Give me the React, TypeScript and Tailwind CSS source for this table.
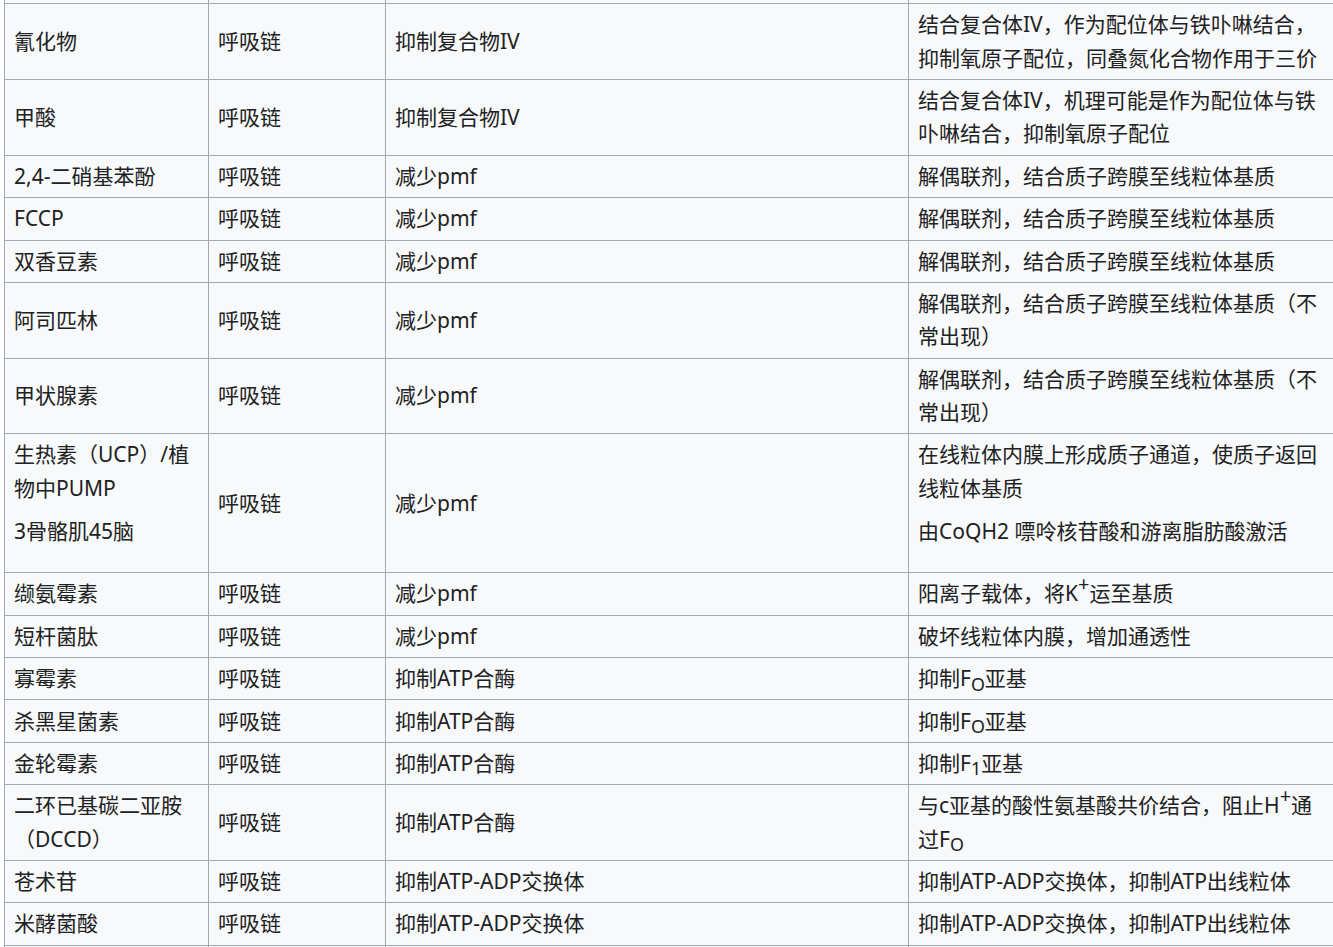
import React from "react";

type Cell = React.ReactNode;

interface Row {
  name: Cell;
  site?: string;
  effect: string;
  note: Cell;
}

const Fo = () => (
  <>
    F<sub className="text-[0.85em]">O</sub>
  </>
);

const Plus = () => <sup className="text-[0.95em]">+</sup>;

const rows: Row[] = [
  {
    name: "氰化物",
    effect: "抑制复合物IV",
    note: (
      <>
        结合复合体IV，作为配位体与铁卟啉结合，
        <br />
        抑制氧原子配位，同叠氮化合物作用于三价
      </>
    ),
  },
  {
    name: "甲酸",
    effect: "抑制复合物IV",
    note: (
      <>
        结合复合体IV，机理可能是作为配位体与铁
        <br />
        卟啉结合，抑制氧原子配位
      </>
    ),
  },
  { name: "2,4-二硝基苯酚", effect: "减少pmf", note: "解偶联剂，结合质子跨膜至线粒体基质" },
  { name: "FCCP", effect: "减少pmf", note: "解偶联剂，结合质子跨膜至线粒体基质" },
  { name: "双香豆素", effect: "减少pmf", note: "解偶联剂，结合质子跨膜至线粒体基质" },
  {
    name: "阿司匹林",
    effect: "减少pmf",
    note: (
      <>
        解偶联剂，结合质子跨膜至线粒体基质（不
        <br />
        常出现）
      </>
    ),
  },
  {
    name: "甲状腺素",
    effect: "减少pmf",
    note: (
      <>
        解偶联剂，结合质子跨膜至线粒体基质（不
        <br />
        常出现）
      </>
    ),
  },
  {
    name: (
      <>
        <div className="mb-[10px]">
          生热素（UCP）/植
          <br />
          物中PUMP
        </div>
        <div className="mb-[20px]">3骨骼肌45脑</div>
      </>
    ),
    effect: "减少pmf",
    note: (
      <>
        <div className="mb-[10px]">
          在线粒体内膜上形成质子通道，使质子返回
          <br />
          线粒体基质
        </div>
        <div className="mb-[20px]">由CoQH2 嘌呤核苷酸和游离脂肪酸激活</div>
      </>
    ),
  },
  {
    name: "缬氨霉素",
    effect: "减少pmf",
    note: (
      <>
        阳离子载体，将K<Plus />运至基质
      </>
    ),
  },
  { name: "短杆菌肽", effect: "减少pmf", note: "破坏线粒体内膜，增加通透性" },
  {
    name: "寡霉素",
    effect: "抑制ATP合酶",
    note: (
      <>
        抑制<Fo />亚基
      </>
    ),
  },
  {
    name: "杀黑星菌素",
    effect: "抑制ATP合酶",
    note: (
      <>
        抑制<Fo />亚基
      </>
    ),
  },
  {
    name: "金轮霉素",
    effect: "抑制ATP合酶",
    note: (
      <>
        抑制F<sub className="text-[0.85em]">1</sub>亚基
      </>
    ),
  },
  {
    name: (
      <>
        二环已基碳二亚胺
        <br />
        （DCCD）
      </>
    ),
    effect: "抑制ATP合酶",
    note: (
      <>
        与c亚基的酸性氨基酸共价结合，阻止H<Plus />通
        <br />
        过<Fo />
      </>
    ),
  },
  { name: "苍术苷", effect: "抑制ATP-ADP交换体", note: "抑制ATP-ADP交换体，抑制ATP出线粒体" },
  { name: "米酵菌酸", effect: "抑制ATP-ADP交换体", note: "抑制ATP-ADP交换体，抑制ATP出线粒体" },
];

const td = "border border-[#a2a9b1] px-[9px] py-[4.05px] align-middle whitespace-nowrap";

export default function App() {
  return (
    <div
      className="h-[947px] w-[1333px] overflow-hidden bg-white text-[21px] leading-[33.3px] text-[#202122]"
      style={{ fontFamily: '"Noto Sans", "Noto Sans CJK SC", sans-serif' }}
    >
      <table className="ml-[4px] mt-[-39px] w-[1331px] table-fixed border-collapse bg-[#f8f9fa]">
        <colgroup>
          <col className="w-[204px]" />
          <col className="w-[177px]" />
          <col className="w-[523px]" />
          <col className="w-[427px]" />
        </colgroup>
        <tbody>
          <tr>
            <td className={td}>&nbsp;</td>
            <td className={td}></td>
            <td className={td}></td>
            <td className={td}></td>
          </tr>
          {rows.map((r, i) => (
            <tr key={i}>
              <td className={td}>{r.name}</td>
              <td className={td}>{r.site ?? "呼吸链"}</td>
              <td className={td}>{r.effect}</td>
              <td className={td}>{r.note}</td>
            </tr>
          ))}
          <tr>
            <td className={td}>&nbsp;</td>
            <td className={td}></td>
            <td className={td}></td>
            <td className={td}></td>
          </tr>
        </tbody>
      </table>
    </div>
  );
}
